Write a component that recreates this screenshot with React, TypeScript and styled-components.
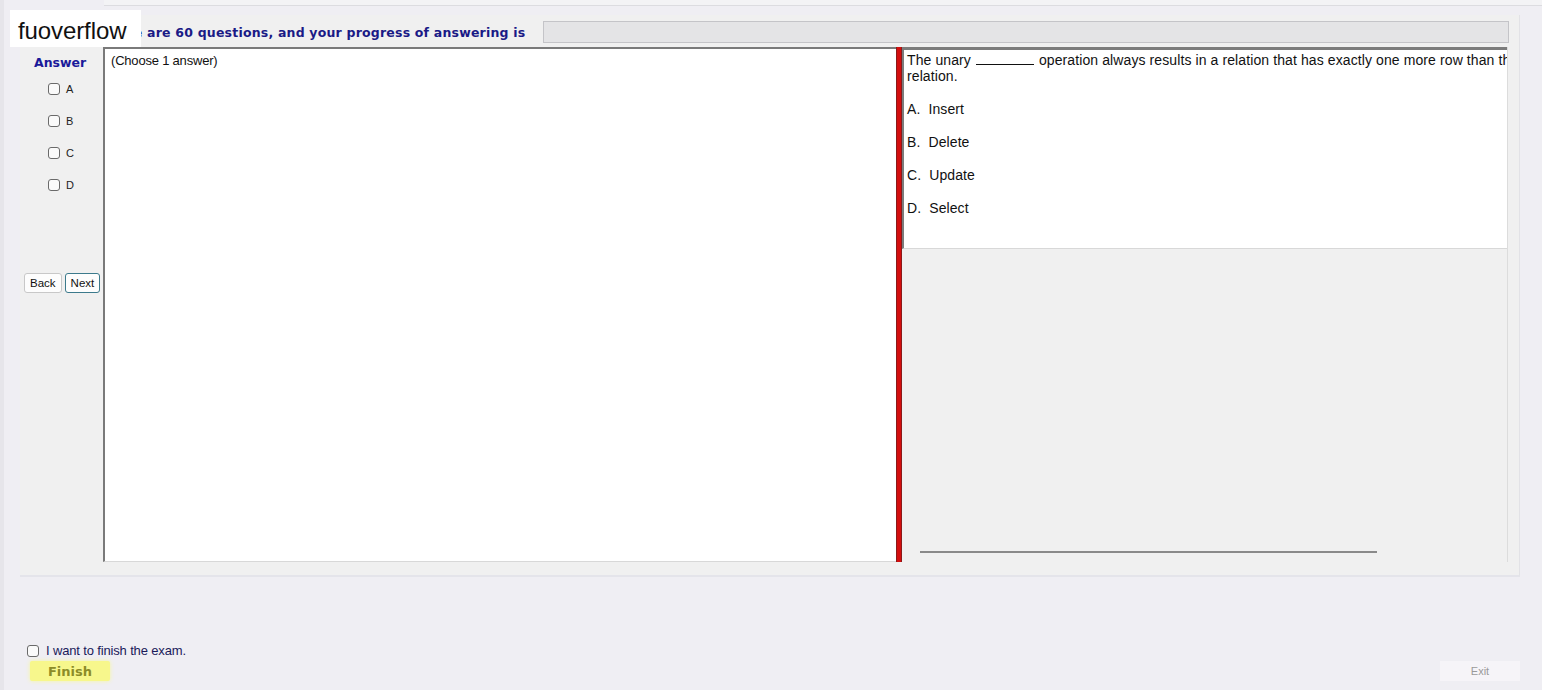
import React, { useState } from "react";
import styled, { createGlobalStyle } from "styled-components";

const GlobalStyle = createGlobalStyle`
  html, body {
    margin: 0;
    padding: 0;
    background: #efeef3;
  }
  body {
    font-family: "Liberation Sans", Arial, sans-serif;
  }
`;

const Page = styled.div`
  position: relative;
  width: 1542px;
  height: 690px;
  box-sizing: border-box;
  display: flex;
  flex-direction: column;
  background: #efeef3;
  border-left: 4px solid #e6e5ea;
  overflow: hidden;
`;

const TopStrip = styled.div`
  height: 5px;
  margin-left: 100px;
  border-bottom: 1px solid #dcdce0;
  background: #f3f3f5;
`;

const MainPanel = styled.div`
  margin: 9px 22px 0 16px;
  height: 562px;
  box-sizing: border-box;
  display: flex;
  flex-direction: column;
  background: #f0f0f0;
  border-right: 1px solid #e2e2e6;
  border-bottom: 2px solid #e4e4ea;
`;

const HeaderRow = styled.div`
  height: 32px;
  display: flex;
  align-items: center;
  padding-top: 2px;
  box-sizing: border-box;
`;

const HeaderText = styled.span`
  margin-left: 81px;
  font-family: "DejaVu Sans", Verdana, sans-serif;
  font-weight: bold;
  font-size: 12.5px;
  color: #1a1a86;
  white-space: nowrap;
  letter-spacing: 0.2px;
`;

const ProgressBar = styled.div`
  flex: 1;
  height: 22px;
  margin: 0 10px 0 18px;
  background: #e4e4e6;
  border: 1px solid #c4c4c8;
  box-sizing: border-box;
`;

const ContentRow = styled.div`
  display: flex;
  height: 515px;
`;

const AnswerColumn = styled.div`
  width: 83px;
  flex-shrink: 0;
  display: flex;
  flex-direction: column;
  padding: 8px 0 0 4px;
  box-sizing: border-box;
  background: #f0f0f0;
`;

const AnswerTitle = styled.div`
  font-family: "DejaVu Sans", Verdana, sans-serif;
  font-weight: bold;
  font-size: 12.5px;
  color: #1a1a9a;
  margin: 0 0 12px 10px;
`;

const OptionList = styled.div`
  display: flex;
  flex-direction: column;
  gap: 18px;
  margin-left: 24px;
`;

const OptionRow = styled.label`
  display: flex;
  align-items: center;
  gap: 6px;
  height: 14px;
  font-size: 11px;
  color: #222;
`;

const Box = styled.input.attrs({ type: "checkbox" })`
  appearance: none;
  width: 12px;
  height: 12px;
  margin: 0;
  border: 1px solid #6a6a6a;
  border-radius: 3px;
  background: #fafafa;
  box-sizing: border-box;
  &:checked {
    background: #6a6a6a;
  }
`;

const NavRow = styled.div`
  display: flex;
  gap: 3px;
  margin-top: 81px;
`;

const NavButton = styled.button<{ $focused?: boolean }>`
  height: 20px;
  padding: 0 5px;
  font-family: "Liberation Sans", Arial, sans-serif;
  font-size: 11.5px;
  color: #111;
  background: #fdfdfd;
  border: 1px solid ${(p) => (p.$focused ? "#3c7a8c" : "#c8c8c8")};
  border-radius: 3px;
`;

const ChoiceBox = styled.div`
  width: 793px;
  flex-shrink: 0;
  box-sizing: border-box;
  background: #ffffff;
  border-top: 2px solid #7a7a7a;
  border-left: 2px solid #7a7a7a;
  border-bottom: 1px solid #d8d8d8;
  padding: 4px 6px;
  font-size: 13px;
  letter-spacing: -0.2px;
  color: #111;
`;

const Splitter = styled.div`
  width: 6px;
  flex-shrink: 0;
  background: #d40e0e;
  border-left: 1px solid #8a1a1a;
  border-right: 1px solid #8a1a1a;
  box-sizing: border-box;
`;

const RightPane = styled.div`
  flex: 1;
  min-width: 0;
  display: flex;
  flex-direction: column;
  background: #f0f0f0;
  border-right: 1px solid #dcdcdc;
  margin-right: 11px;
`;

const QuestionBox = styled.div`
  height: 202px;
  box-sizing: border-box;
  background: #ffffff;
  border-top: 3px solid #7c7c7c;
  border-left: 2px solid #7c7c7c;
  border-bottom: 1px solid #d8d8d8;
  padding: 2px 0 0 3px;
  font-size: 14px;
  line-height: 16px;
  letter-spacing: 0.1px;
  color: #111;
  overflow: hidden;
`;

const QuestionText = styled.div`
  white-space: nowrap;
  margin-bottom: 17px;
`;

const Blank = styled.span`
  display: inline-block;
  width: 58px;
  border-bottom: 1px solid #111;
  margin: 0 5px;
  height: 12px;
`;

const Choice = styled.div`
  margin-bottom: 17px;
`;

const ScrollTrack = styled.div`
  flex: 1;
  display: flex;
  align-items: flex-end;
  padding: 0 0 9px 18px;
`;

const ScrollLine = styled.div`
  width: 457px;
  height: 2px;
  background: #8a8a8a;
`;

const Footer = styled.div`
  flex: 1;
  display: flex;
  align-items: flex-end;
  justify-content: space-between;
  padding: 0 22px 9px 23px;
`;

const FinishGroup = styled.div`
  display: flex;
  flex-direction: column;
  gap: 3px;
`;

const FinishLabel = styled.label`
  display: flex;
  align-items: center;
  gap: 7px;
  font-size: 13px;
  color: #1a1a5a;
  letter-spacing: -0.15px;
`;

const FinishButton = styled.button`
  width: 80px;
  height: 20px;
  margin-left: 3px;
  background: #f7f78c;
  border: none;
  border-radius: 2px;
  font-family: "DejaVu Sans", Verdana, sans-serif;
  font-weight: bold;
  font-size: 13px;
  color: #8c8c28;
  box-shadow: 0 0 4px #f7f7a0;
`;

const ExitButton = styled.button`
  width: 80px;
  height: 20px;
  background: #f6f4f8;
  border: none;
  font-family: "Liberation Sans", Arial, sans-serif;
  font-size: 11px;
  color: #9a9a9a;
`;

const Watermark = styled.div`
  position: absolute;
  left: 6px;
  top: 10px;
  width: 131px;
  height: 37px;
  background: #ffffff;
  display: flex;
  align-items: center;
  padding: 4px 0 0 8px;
  box-sizing: border-box;
  font-family: "Liberation Sans", Arial, sans-serif;
  font-size: 24px;
  color: #111;
  letter-spacing: -0.1px;
`;

const options = ["A", "B", "C", "D"];
const choices = ["Insert", "Delete", "Update", "Select"];

export default function App() {
  const [picked, setPicked] = useState<string | null>(null);
  const [finish, setFinish] = useState(false);

  return (
    <>
      <GlobalStyle />
      <Page>
        <TopStrip />
        <MainPanel>
          <HeaderRow>
            <HeaderText>There are 60 questions, and your progress of answering is</HeaderText>
            <ProgressBar />
          </HeaderRow>
          <ContentRow>
            <AnswerColumn>
              <AnswerTitle>Answer</AnswerTitle>
              <OptionList>
                {options.map((o) => (
                  <OptionRow key={o}>
                    <Box checked={picked === o} onChange={() => setPicked(picked === o ? null : o)} />
                    {o}
                  </OptionRow>
                ))}
              </OptionList>
              <NavRow>
                <NavButton>Back</NavButton>
                <NavButton $focused>Next</NavButton>
              </NavRow>
            </AnswerColumn>
            <ChoiceBox>(Choose 1 answer)</ChoiceBox>
            <Splitter />
            <RightPane>
              <QuestionBox>
                <QuestionText>
                  The unary<Blank />operation always results in a relation that has exactly one more row than the original
                  <br />
                  relation.
                </QuestionText>
                {choices.map((c, i) => (
                  <Choice key={c}>
                    {options[i]}.&nbsp; {c}
                  </Choice>
                ))}
              </QuestionBox>
              <ScrollTrack>
                <ScrollLine />
              </ScrollTrack>
            </RightPane>
          </ContentRow>
        </MainPanel>
        <Footer>
          <FinishGroup>
            <FinishLabel>
              <Box checked={finish} onChange={() => setFinish(!finish)} />I want to finish the exam.
            </FinishLabel>
            <FinishButton>Finish</FinishButton>
          </FinishGroup>
          <ExitButton>Exit</ExitButton>
        </Footer>
        <Watermark>fuoverflow</Watermark>
      </Page>
    </>
  );
}
